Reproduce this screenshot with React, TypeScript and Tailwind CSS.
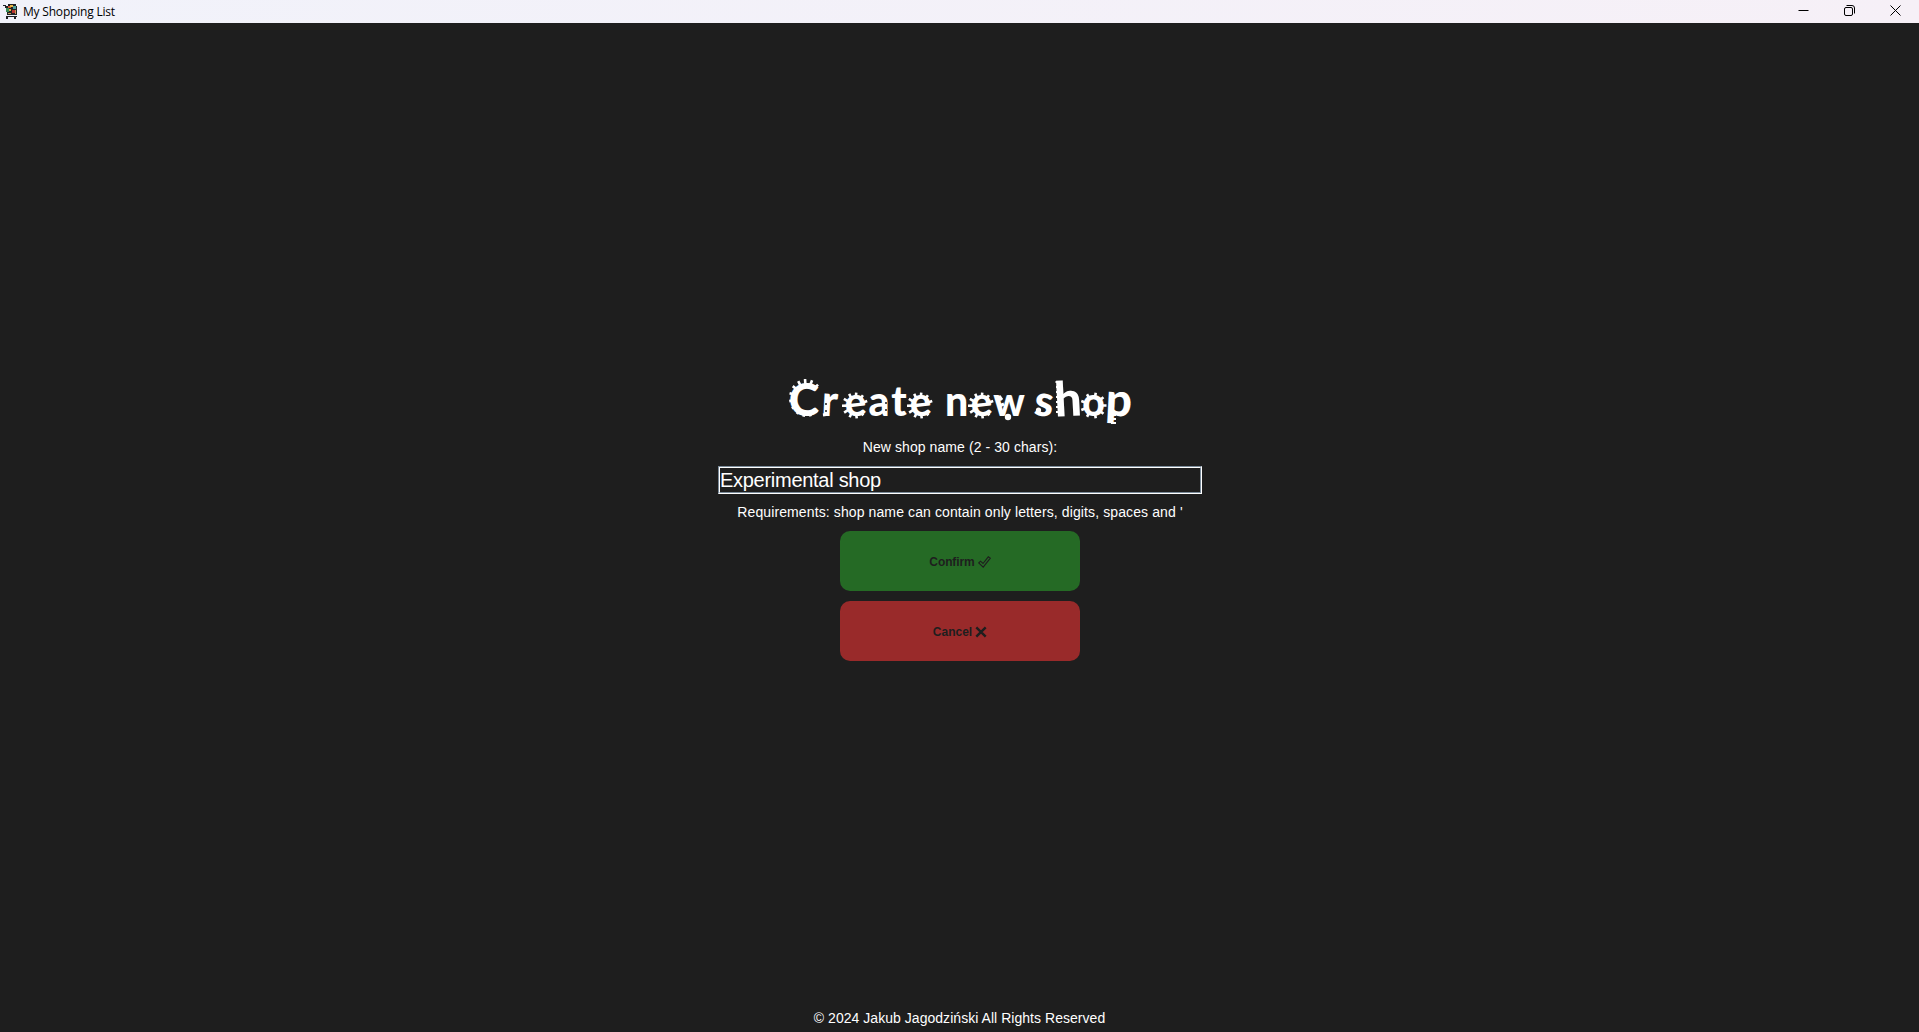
import React from "react";

const letters: [string, string][] = [
  ["C", "w-[28px] text-[46px]"],
  ["r", "w-[24px] text-[43px] rotate-3"],
  ["e", "w-[26px] text-[40px] -rotate-6"],
  ["a", "w-[22px] text-[41px]"],
  ["t", "w-[18px] text-[41px]"],
  ["e", "w-[24px] text-[40px] -rotate-6"],
  [" ", "w-[13px] text-[41px]"],
  ["n", "w-[23px] text-[41px]"],
  ["e", "w-[26px] text-[40px] -rotate-6"],
  ["w", "w-[30px] text-[39px]"],
  [" ", "w-[10px] text-[41px]"],
  ["s", "w-[21px] text-[43px] rotate-6"],
  ["h", "w-[26px] text-[48px] -rotate-3"],
  ["o", "w-[25px] text-[39px]"],
  ["p", "w-[26px] text-[46px] rotate-3"],
];

/* Cog teeth around a round letter: centre, radii, start and end angle, count. */
function teeth(cx: number, cy: number, rx: number, ry: number, from: number, to: number, n: number) {
  let d = "";
  for (let i = 0; i < n; i++) {
    const a = ((from + ((to - from) * i) / (n - 1)) * Math.PI) / 180;
    const c = Math.cos(a);
    const s = Math.sin(a);
    d += `M${cx + (rx - 3) * c} ${cy + (ry - 3) * s}L${cx + (rx + 2) * c} ${cy + (ry + 2) * s}`;
  }
  return d;
}

function Title() {
  return (
    <h1 className="relative flex h-[60px] w-[342px] items-baseline font-['Lato','Open_Sans',sans-serif] leading-[60px] font-black text-white">
      {letters.map(([ch, cls], i) => (
        <span key={i} className={`flex justify-center whitespace-pre ${cls}`}>{ch}</span>
      ))}
      <svg className="absolute inset-0" width="342" height="60" viewBox="790 368 342 60" fill="none" stroke="#fff" strokeWidth="2.6" overflow="visible" aria-hidden="true">
        <path d={teeth(806, 398, 15, 17, 50, 315, 12)} />
        <path d={teeth(855, 405.5, 11, 11, 50, 340, 10)} />
        <path d={teeth(920, 405.5, 11, 11, 50, 340, 10)} />
        <path d={teeth(981, 405.5, 11, 11, 50, 340, 10)} />
        <path d={teeth(1093.5, 405.5, 11, 11, 0, 320, 9)} />
        <path d="M1055.500 382h6M1056 387h5M1056 392h5M1056 397h5M1056 402h5M1056 407h5M1056 412h5M1111 415h5M1111 419h5M1111 423h5" strokeWidth="2" />
        <path d="M823 415l6-1M999 396l3 4M997 400l5-2M999 406l5-2" strokeWidth="3" />
        <circle cx="1008" cy="417" r="3.200" fill="#fff" stroke="none" />
        <circle cx="1038.500" cy="410" r="2.600" fill="#fff" stroke="none" />
        <g fill="#1e1e1e" stroke="none">
          <circle cx="826" cy="404" r="1" />
          <circle cx="826" cy="411" r="1" />
          <circle cx="886" cy="403" r="1" />
          <circle cx="886" cy="410" r="1" />
        </g>
      </svg>
    </h1>
  );
}

function CartIcon() {
  return (
    <svg width="16" height="16" viewBox="0 0 16 16" shapeRendering="crispEdges" aria-hidden="true">
      <path fill="#202326" d="M0 1h3v1H0zM2 2h12v9H4V8H3V4H2zM5 0h8v2H5zM3 12h11v1H3z" />
      <path fill="#378a55" d="M3 4h3v4H3z" />
      <path fill="#d65a31" d="M5 2h3v2H5z" />
      <path fill="#e5b542" d="M7 1h3v2H7zM6 5h2v2H6z" />
      <path fill="#4f9f9b" d="M10 2h3v3h-3z" />
      <path fill="#b83230" d="M9 6h3v3H9z" />
      <path fill="#c49a55" d="M12 6h1v4h-1zM5 9h3v1H5z" />
      <path fill="#202326" d="M3 13h2v2H3zM11 13h2v2h-2z" />
    </svg>
  );
}

function TitleBar() {
  return (
    <header className="flex h-[23px] shrink-0 items-center justify-between bg-gradient-to-r from-[#f1f2fa] to-[#f6f0f7] text-black">
      <div className="flex items-center gap-[4px] pl-[3px]">
        <CartIcon />
        <span className="font-['Open_Sans','Noto_Sans',sans-serif] text-[12px] leading-[22px] tracking-[-0.2px]">My Shopping List</span>
      </div>
      <div className="flex h-[23px] items-center gap-[35px] pr-[18px] pb-[3px]">
        <svg width="11" height="11" viewBox="0 0 11 11" stroke="#000"><path d="M.5 5.500h10" /></svg>
        <svg width="11" height="11" viewBox="0 0 11 11" fill="none" stroke="#000"><rect x=".5" y="2.500" width="8" height="8" rx="1.500" /><path d="M2.500.5h5.500a2.500 2.500 0 0 1 2.500 2.500v5.500" /></svg>
        <svg width="11" height="11" viewBox="0 0 11 11" stroke="#000"><path d="M.5.5l10 10M10.500.5l-10 10" /></svg>
      </div>
    </header>
  );
}

export default function App() {
  return (
    <div className="flex h-screen flex-col overflow-hidden bg-[#1e1e1e] font-['Liberation_Sans',Arial,sans-serif] text-white">
      <TitleBar />
      <main className="flex flex-1 flex-col items-center pt-[345px] pl-[1px]">
        <div className="pl-[2px]">
          <Title />
        </div>
        <label className="mt-[11px] text-[14px] leading-[16px] tracking-[0.08px]">New shop name (2 - 30 chars):</label>
        <div className="mt-[11px] h-[28px] w-[484px] border border-t-[#7a8a99] border-r-white border-b-white border-l-[#7a8a99]">
          <div className="h-full border border-t-white border-r-[#7a8a99] border-b-[#7a8a99] border-l-white">
            <div className="text-[20px] leading-[24px] tracking-[-0.28px]">Experimental shop</div>
          </div>
        </div>
        <p className="mt-[10px] text-[14px] leading-[16px] tracking-[0.11px]">Requirements: shop name can contain only letters, digits, spaces and '</p>
        <button className="mt-[11px] flex h-[60px] w-[240px] items-center justify-center gap-[3px] rounded-[10px] bg-[#256a25] pt-[2px] text-[12px] font-bold tracking-[-0.1px] text-[#1e1e1e]">
          Confirm
          <svg width="13" height="12" viewBox="0 0 13 12" fill="none" stroke="#1e1e1e" strokeWidth="1.100"><path d="M.7 7L2.500 5.200l2.500 2.300L10.300.8l2 1.400L5.200 11.200z" /></svg>
        </button>
        <button className="mt-[10px] flex h-[60px] w-[240px] items-center justify-center gap-[3px] rounded-[10px] bg-[#992a2a] pt-[2px] text-[12px] font-bold text-[#1e1e1e]">
          Cancel
          <svg width="12" height="12" viewBox="0 0 12 12" stroke="#1e1e1e" strokeWidth="2.400"><path d="M1.300 1.300l9.400 9.400M10.700 1.300l-9.400 9.400" /></svg>
        </button>
      </main>
      <footer className="flex h-[28px] shrink-0 justify-center text-[14px] leading-[28px] tracking-[0.04px]">© 2024 Jakub Jagodziński All Rights Reserved</footer>
    </div>
  );
}
